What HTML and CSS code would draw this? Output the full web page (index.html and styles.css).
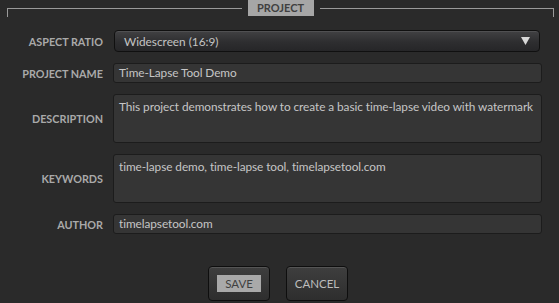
FILE: index.html
```html
<!doctype html>
<html lang="en">

<head>
  <meta charset="UTF-8" />
  <meta name="viewport" content="width=device-width, initial-scale=1.0" />
  <title>Project</title>
  <link rel="stylesheet" href="styles.css">
</head>

<body>
  <div class="panel">
    <div class="panel-head">
      <div class="line line-left"></div>
      <div class="legend">PROJECT</div>
      <div class="line line-right"></div>
    </div>

    <form class="form">
      <label class="label">ASPECT RATIO</label>
      <div class="select">
        <span>Widescreen (16:9)</span>
        <svg class="arrow" width="9" height="8" viewBox="0 0 9 8">
          <path d="M0 0 H9 L4.5 8 Z" fill="#d8d8d8" />
        </svg>
      </div>

      <label class="label">PROJECT NAME</label>
      <div class="field">Time-Lapse Tool Demo</div>

      <label class="label">DESCRIPTION</label>
      <div class="field area">This project demonstrates how to create a basic time-lapse video with watermark</div>

      <label class="label">KEYWORDS</label>
      <div class="field area">time-lapse demo, time-lapse tool, timelapsetool.com</div>

      <label class="label">AUTHOR</label>
      <div class="field">timelapsetool.com</div>
    </form>

    <div class="buttons">
      <button class="btn" type="button"><span class="focus">SAVE</span></button>
      <button class="btn" type="button">CANCEL</button>
    </div>
  </div>
</body>

</html>
```

FILE: styles.css
```css
body {
  margin: 0;
  background-color: #2a2a2a;
  font-family: Lato, "Open Sans", sans-serif;
  color: #bdbdbd;
}

.panel {
  width: 559px;
  height: 303px;
  overflow: hidden;
}

/* header: bracket line with the legend box */
.panel-head {
  display: flex;
  align-items: flex-start;
  height: 17px;
  padding: 0 5px 0 7px;
}

.line {
  flex: 1;
  margin-top: 8px;
  height: 8px;
  border-top: 1px solid #9a9a9a;
}

.line-left {
  border-left: 1px solid #9a9a9a;
}

.line-right {
  border-right: 1px solid #9a9a9a;
}

.legend {
  width: 66px;
  height: 16px;
  margin: 0 6px;
  background-color: #a6a6a6;
  color: #404040;
  font-size: 11px;
  font-weight: bold;
  line-height: 16px;
  text-align: center;
}

.form {
  display: grid;
  grid-template-columns: 103px 1fr;
  column-gap: 10px;
  row-gap: 11px;
  margin-top: 13px;
  padding-right: 17px;
}

.label {
  align-self: center;
  text-align: right;
  font-size: 10.8px;
  font-weight: bold;
  color: #a9a9a9;
}

.select {
  display: flex;
  align-items: center;
  justify-content: space-between;
  height: 20px;
  margin: 0 2px 0 1px;
  padding: 0 9px 0 9px;
  border: 1px solid #101010;
  border-radius: 4px;
  background: linear-gradient(#414143, #2e2e30 55%, #262628);
  box-shadow: inset 0 1px 0 #505052;
  font-size: 11.8px;
  color: #c4c4c4;
}

.arrow {
  display: block;
}

.field {
  height: 18px;
  padding: 0 1px 0 5px;
  border: 1px solid #1c1c1c;
  border-radius: 3px;
  background-color: #353535;
  font-size: 11.8px;
  letter-spacing: -0.06px;
  line-height: 18px;
  color: #c6c6c6;
}

.area {
  height: 43px;
  padding-top: 4px;
  line-height: 16px;
}

.buttons {
  display: flex;
  justify-content: center;
  gap: 16px;
  margin-top: 32px;
  padding-right: 3px;
}

.btn {
  width: 62px;
  height: 35px;
  padding: 0;
  border: 1px solid #0e0e0e;
  border-radius: 4px;
  background: linear-gradient(#3e3e3e, #2e2e2e);
  box-shadow: inset 0 1px 0 #555;
  font-family: Lato, "Open Sans", sans-serif;
  font-size: 11.5px;
  color: #bdbdbd;
}

.focus {
  display: inline-block;
  padding: 2px 8px;
  background-color: #a9a9a9;
  color: #404040;
}
```
